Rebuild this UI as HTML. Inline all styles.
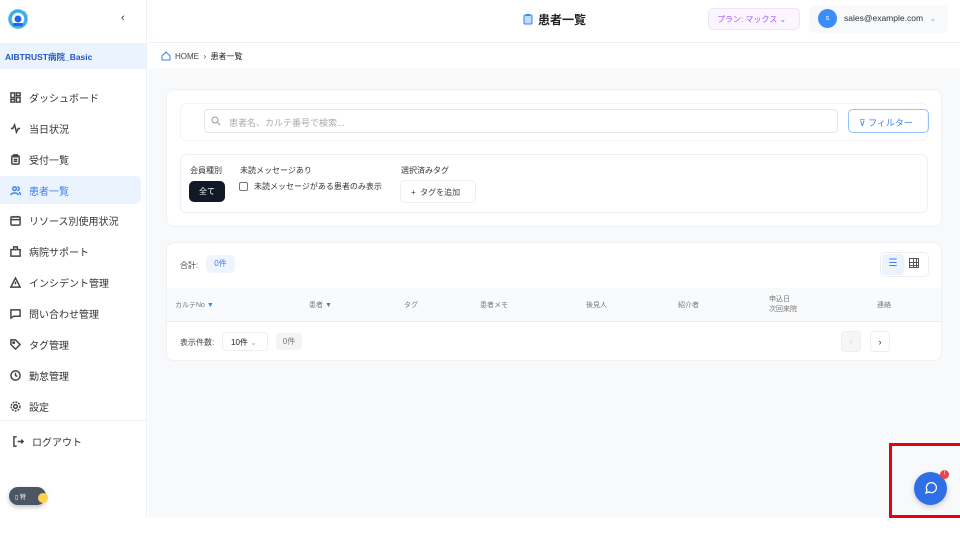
<!DOCTYPE html>
<html><head><meta charset="utf-8"><style>
*{box-sizing:border-box;margin:0;padding:0}
body{width:960px;height:540px;overflow:hidden;background:#fff;font-family:"Liberation Sans","Noto Sans CJK JP",sans-serif;color:#333;position:relative}
.abs{position:absolute}
.side{left:0;top:0;width:147px;height:517px;background:#fff;border-right:1px solid #eef0f3}
.nav{left:0;width:141px;height:28px;display:flex;align-items:center;padding-left:10px;font-size:10px;color:#333}
.nav svg{width:11px;height:11px;margin-right:8px;stroke:#444;fill:none;stroke-width:1.6}
.nav.act{background:#eaf3fe;color:#3b82f6;border-radius:0 6px 6px 0}
.nav.act svg{stroke:#3b82f6}
.main{left:148px;top:68px;width:812px;height:449px;background:#f8f9fb}
.card{background:#fff;border-radius:8px;border:1px solid #f0f1f4}
.th{font-size:7px;color:#777;top:300px}
</style></head><body>
<div class="abs side"></div>
<!-- logo -->
<svg class="abs" style="left:8px;top:8px" width="22" height="22" viewBox="0 0 22 22"><circle cx="10" cy="11" r="8" fill="none" stroke="#3bb0e8" stroke-width="3.5"/><circle cx="10" cy="11" r="3.5" fill="#2563eb"/><rect x="5" y="15" width="10" height="3" rx="1.5" fill="#2563eb"/><circle cx="17" cy="4" r="1" fill="#6cc"/><circle cx="19" cy="7" r=".8" fill="#6cc"/><circle cx="14" cy="3" r=".7" fill="#6cc"/></svg>
<div class="abs" style="left:121px;top:12px;font-size:11px;color:#333">‹</div>
<div class="abs" style="left:0;top:43px;width:147px;height:26px;background:#eaf3fe;font-size:8.5px;font-weight:bold;color:#2457c5;padding:8px 0 0 5px">AIBTRUST病院_Basic</div>
<div class="abs nav" style="top:83px"><svg viewBox="0 0 12 12"><rect x="1" y="1" width="4" height="5"/><rect x="7" y="1" width="4" height="3"/><rect x="1" y="8" width="4" height="3"/><rect x="7" y="6" width="4" height="5"/></svg>ダッシュボード</div>
<div class="abs nav" style="top:114px"><svg viewBox="0 0 12 12"><path d="M1 6h2l2-4 2 8 2-4h2"/></svg>当日状況</div>
<div class="abs nav" style="top:145px"><svg viewBox="0 0 12 12"><rect x="2" y="2" width="8" height="9" rx="1"/><path d="M4 1h4v2H4zM4 6h4M4 8h4"/></svg>受付一覧</div>
<div class="abs nav act" style="top:176px"><svg viewBox="0 0 12 12"><circle cx="5" cy="4" r="2"/><path d="M1 11c0-3 8-3 8 0M8 2a2 2 0 010 4M10 8c1 .5 1.5 1.5 1.5 3"/></svg>患者一覧</div>
<div class="abs nav" style="top:206px"><svg viewBox="0 0 12 12"><rect x="1" y="2" width="10" height="9" rx="1"/><path d="M1 5h10M4 1v2M8 1v2"/></svg>リソース別使用状況</div>
<div class="abs nav" style="top:237px"><svg viewBox="0 0 12 12"><path d="M1 11V4h3V1h4v3h3v7zM6 3v2M5 4h2"/></svg>病院サポート</div>
<div class="abs nav" style="top:268px"><svg viewBox="0 0 12 12"><path d="M6 1l5 10H1zM6 5v3"/></svg>インシデント管理</div>
<div class="abs nav" style="top:299px"><svg viewBox="0 0 12 12"><path d="M1 2h10v7H4l-3 2z"/></svg>問い合わせ管理</div>
<div class="abs nav" style="top:330px"><svg viewBox="0 0 12 12"><path d="M1 1h5l5 5-5 5-5-5z"/><circle cx="4" cy="4" r=".8"/></svg>タグ管理</div>
<div class="abs nav" style="top:361px"><svg viewBox="0 0 12 12"><circle cx="6" cy="6" r="5"/><path d="M6 3v3l2 1"/></svg>勤怠管理</div>
<div class="abs nav" style="top:392px"><svg viewBox="0 0 12 12"><circle cx="6" cy="6" r="2"/><circle cx="6" cy="6" r="4.8" stroke-dasharray="2 1.2"/></svg>設定</div>
<div class="abs" style="left:0;top:420px;width:147px;border-top:1px solid #eee"></div>
<div class="abs nav" style="top:427px;padding-left:13px"><svg viewBox="0 0 12 12"><path d="M4 1H1v10h3M5 6h6M9 4l2 2-2 2"/></svg>ログアウト</div>
<div class="abs" style="left:9px;top:487px;width:37px;height:18px;background:#4b5563;border-radius:9px;box-shadow:0 2px 5px rgba(0,0,0,.25);font-size:6px;color:#fff;padding:5px 0 0 6px">▯ 特</div>
<div class="abs" style="left:38px;top:493px;width:10px;height:10px;border-radius:50%;background:#fcd34d"></div>

<!-- header -->
<div class="abs" style="left:148px;top:0;width:812px;height:43px;border-bottom:1px solid #f0f1f4"></div>
<svg class="abs" style="left:523px;top:13px" width="10" height="12" viewBox="0 0 10 12"><rect x="1" y="2" width="8" height="9" rx="1" fill="#bfdbfe" stroke="#3b82f6"/><rect x="3" y="1" width="4" height="2" fill="#3b82f6"/></svg>
<div class="abs" style="left:538px;top:11px;font-size:12px;font-weight:bold;color:#222">患者一覧</div>
<div class="abs" style="left:708px;top:8px;width:92px;height:22px;background:#faf5ff;border:1px solid #ede4fb;border-radius:5px;font-size:8px;color:#a855f7;padding:5px 0 0 8px">プラン: マックス ⌄</div>
<div class="abs" style="left:809px;top:5px;width:139px;height:28px;background:#f8f9fb;border-radius:6px"></div>
<div class="abs" style="left:818px;top:9px;width:19px;height:19px;border-radius:50%;background:#3b8ef6;color:#fff;font-size:7px;text-align:center;line-height:19px">s</div>
<div class="abs" style="left:844px;top:13px;font-size:8.5px;color:#333">sales@example.com <span style="color:#aaa;margin-left:4px">⌄</span></div>
<!-- breadcrumb -->
<svg class="abs" style="left:161px;top:51px" width="10" height="10" viewBox="0 0 10 10"><path d="M1 5L5 1l4 4v4H1z" fill="none" stroke="#3b82f6"/></svg>
<div class="abs" style="left:175px;top:51px;font-size:8px;color:#444">HOME &nbsp;›&nbsp; <span style="color:#222">患者一覧</span></div>

<div class="abs main"></div>
<div class="abs card" style="left:166px;top:89px;width:776px;height:138px"></div>
<div class="abs" style="left:180px;top:103px;width:748px;height:38px;border:1px solid #f4f4f6;border-radius:6px"></div>
<div class="abs" style="left:204px;top:109px;width:634px;height:24px;border:1px solid #e5e7eb;border-radius:4px;font-size:9px;color:#aaa;padding:6px 0 0 24px">患者名、カルテ番号で検索...</div>
<svg class="abs" style="left:211px;top:116px" width="10" height="10" viewBox="0 0 10 10"><circle cx="4" cy="4" r="3" fill="none" stroke="#999"/><path d="M6.5 6.5L9 9" stroke="#999"/></svg>
<div class="abs" style="left:848px;top:109px;width:81px;height:24px;border:1px solid #93c5fd;border-radius:5px;font-size:9px;color:#3b82f6;padding:6px 0 0 10px">⊽ フィルター</div>
<div class="abs" style="left:180px;top:154px;width:748px;height:59px;border:1px solid #f0f1f4;border-radius:6px"></div>
<div class="abs" style="left:190px;top:165px;font-size:8px;color:#333">会員種別</div>
<div class="abs" style="left:189px;top:181px;width:36px;height:21px;background:#111827;border-radius:5px;color:#fff;font-size:8px;text-align:center;line-height:21px">全て</div>
<div class="abs" style="left:240px;top:165px;font-size:8px;color:#333">未読メッセージあり</div>
<div class="abs" style="left:239px;top:182px;width:9px;height:9px;border:1px solid #777;border-radius:2px"></div>
<div class="abs" style="left:254px;top:181px;font-size:8px;color:#333">未読メッセージがある患者のみ表示</div>
<div class="abs" style="left:401px;top:165px;font-size:8px;color:#333">選択済みタグ</div>
<div class="abs" style="left:400px;top:180px;width:76px;height:23px;border:1px solid #eee;border-radius:5px;font-size:8px;color:#444;padding:6px 0 0 10px">+ &nbsp;タグを追加</div>

<div class="abs card" style="left:166px;top:242px;width:776px;height:119px"></div>
<div class="abs" style="left:180px;top:260px;font-size:8px;color:#444">合計:</div>
<div class="abs" style="left:206px;top:255px;width:29px;height:18px;background:#eef5ff;border-radius:5px;font-size:8px;color:#3b82f6;text-align:center;line-height:18px">0件</div>
<div class="abs" style="left:880px;top:252px;width:49px;height:25px;border:1px solid #eee;border-radius:5px"></div>
<div class="abs" style="left:882px;top:254px;width:22px;height:21px;background:#eaf3fe;border-radius:4px;color:#3b82f6;font-size:10px;text-align:center;line-height:20px">☰</div>
<div class="abs" style="left:909px;top:258px;width:10px;height:10px;border:1px solid #555;background:linear-gradient(90deg,transparent 3px,#555 3px,#555 4px,transparent 4px,transparent 6px,#555 6px,#555 7px,transparent 7px),linear-gradient(transparent 3px,#555 3px,#555 4px,transparent 4px,transparent 6px,#555 6px,#555 7px,transparent 7px)"></div>
<div class="abs" style="left:167px;top:288px;width:774px;height:34px;background:#f9fafb;border-bottom:1px solid #eee"></div>
<div class="abs th" style="left:175px">カルテNo <span style="color:#3b82f6">▼</span></div>
<div class="abs th" style="left:309px">患者 ▼</div>
<div class="abs th" style="left:404px">タグ</div>
<div class="abs th" style="left:480px">患者メモ</div>
<div class="abs th" style="left:586px">後見人</div>
<div class="abs th" style="left:678px">紹介者</div>
<div class="abs th" style="left:769px;top:295px;line-height:10px">申込日<br>次回来院</div>
<div class="abs th" style="left:877px">連絡</div>
<div class="abs" style="left:180px;top:337px;font-size:8px;color:#444">表示件数:</div>
<div class="abs" style="left:222px;top:332px;width:46px;height:19px;border:1px solid #eee;border-radius:4px;font-size:8px;color:#222;padding:4px 0 0 8px">10件 <span style="color:#aaa">⌄</span></div>
<div class="abs" style="left:276px;top:333px;width:26px;height:17px;background:#f3f4f6;border-radius:4px;font-size:8px;color:#777;text-align:center;line-height:17px">0件</div>
<div class="abs" style="left:841px;top:331px;width:20px;height:21px;background:#f5f6f8;border:1px solid #eee;border-radius:4px;font-size:8px;color:#ccc;text-align:center;line-height:20px">‹</div>
<div class="abs" style="left:870px;top:331px;width:20px;height:21px;border:1px solid #eee;border-radius:4px;font-size:9px;color:#333;text-align:center;line-height:20px">›</div>

<!-- chat -->
<div class="abs" style="left:889px;top:443px;width:71px;height:75px;border:3px solid #e8000b;border-right:none"></div>
<div class="abs" style="left:914px;top:472px;width:33px;height:33px;border-radius:50%;background:#2f6fe6;box-shadow:0 2px 6px rgba(0,0,0,.2)"></div>
<svg class="abs" style="left:923px;top:481px" width="15" height="15" viewBox="0 0 15 15"><path d="M3 12l1-3a5 5 0 112 2z" fill="none" stroke="#fff" stroke-width="1.3"/></svg>
<div class="abs" style="left:940px;top:470px;width:9px;height:9px;border-radius:50%;background:#ef4444;color:#fff;font-size:6px;text-align:center;line-height:9px">!</div>
</body></html>
